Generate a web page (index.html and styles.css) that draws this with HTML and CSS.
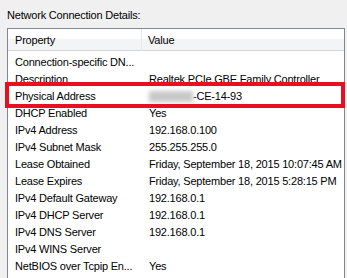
FILE: index.html
```html
<!DOCTYPE html>
<html>
<head>
<meta charset="utf-8">
<link rel="stylesheet" href="styles.css">
</head>
<body>
<div class="page">
  <div class="title">Network Connection Details:</div>
  <div class="listbox">
    <div class="header">
      <div class="hcell prop">Property</div>
      <div class="hcell val">Value</div>
    </div>
    <div class="rows">
      <div class="row"><div class="cell prop">Connection-specific DN...</div><div class="cell val"></div></div>
      <div class="row"><div class="cell prop">Description</div><div class="cell val">Realtek PCIe GBE Family Controller</div></div>
      <div class="row"><div class="cell prop">Physical Address</div><div class="cell val"><span class="blur"></span>-CE-14-93</div></div>
      <div class="row"><div class="cell prop">DHCP Enabled</div><div class="cell val">Yes</div></div>
      <div class="row"><div class="cell prop">IPv4 Address</div><div class="cell val">192.168.0.100</div></div>
      <div class="row"><div class="cell prop">IPv4 Subnet Mask</div><div class="cell val">255.255.255.0</div></div>
      <div class="row"><div class="cell prop">Lease Obtained</div><div class="cell val">Friday, September 18, 2015 10:07:45 AM</div></div>
      <div class="row"><div class="cell prop">Lease Expires</div><div class="cell val">Friday, September 18, 2015 5:28:15 PM</div></div>
      <div class="row"><div class="cell prop">IPv4 Default Gateway</div><div class="cell val">192.168.0.1</div></div>
      <div class="row"><div class="cell prop">IPv4 DHCP Server</div><div class="cell val">192.168.0.1</div></div>
      <div class="row"><div class="cell prop">IPv4 DNS Server</div><div class="cell val">192.168.0.1</div></div>
      <div class="row"><div class="cell prop">IPv4 WINS Server</div><div class="cell val"></div></div>
      <div class="row"><div class="cell prop">NetBIOS over Tcpip En...</div><div class="cell val">Yes</div></div>
    </div>
  </div>
  <div class="highlight"></div>
</div>
</body>
</html>
```
FILE: styles.css
```css
html, body {
  margin: 0;
  padding: 0;
  background: #f0f0f0;
  overflow: hidden;
}
.page {
  position: relative;
  width: 347px;
  height: 278px;
  font-family: "Liberation Sans", Arial, sans-serif;
  font-size: 11px;
  letter-spacing: -0.2px;
  color: #000;
}
.title {
  padding: 7px 0 0 7px;
  line-height: 17px;
  height: 16px;
}
.listbox {
  margin: 5px 0 0 7px;
  width: 336px;
  height: 260px;
  border: 1px solid #828790;
  border-bottom: none;
  background: #fff;
}
.header {
  display: grid;
  grid-template-columns: 134px 1fr;
  height: 21px;
  border-bottom: 1px solid #d5d5d5;
  background: linear-gradient(to bottom, #ffffff 0%, #ffffff 50%, #f3f4f6 50%, #f3f4f6 100%);
}
.hcell {
  line-height: 22px;
  white-space: nowrap;
}
.hcell.prop {
  padding-left: 7px;
  border-right: 1px solid #e3e8ee;
}
.hcell.val {
  padding-left: 6px;
}
.rows {
  padding-top: 3px;
}
.row {
  display: grid;
  grid-template-columns: 135px 1fr;
  height: 17px;
  line-height: 17px;
}
.cell {
  white-space: nowrap;
}
.cell.prop {
  padding-left: 7px;
}
.cell.val {
  padding-left: 6px;
}
.blur {
  display: inline-block;
  vertical-align: middle;
  width: 44px;
  height: 11px;
  background: #c8c8c8;
  filter: blur(2px);
  margin-top: -2px;
}
.highlight {
  position: absolute;
  left: 5px;
  top: 82px;
  width: 332px;
  height: 18px;
  border: 4px solid #e8101e;
}
```
